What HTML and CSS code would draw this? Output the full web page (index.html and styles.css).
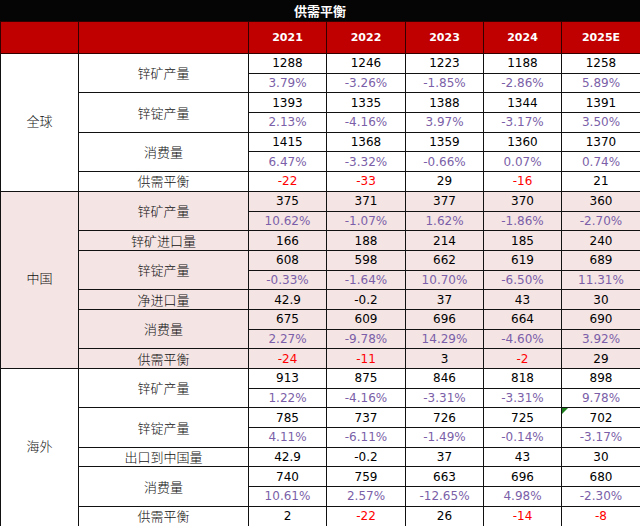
FILE: index.html
```html
<!DOCTYPE html>
<html>
<head>
<meta charset="utf-8">
<link rel="stylesheet" href="styles.css">
</head>
<body>
<div class="title">供需平衡</div>
<table class="grid">
<colgroup>
<col class="c1"><col class="c2"><col class="cy"><col class="cy2"><col class="cy"><col class="cy"><col class="cy2">
</colgroup>
<thead>
<tr class="hd"><th></th><th></th><th>2021</th><th>2022</th><th>2023</th><th>2024</th><th>2025E</th></tr>
</thead>
<tbody class="gl">
<tr><td class="grp" rowspan="7">全球</td><td class="lbl" rowspan="2">锌矿产量</td><td>1288</td><td>1246</td><td>1223</td><td>1188</td><td>1258</td></tr>
<tr class="pct"><td>3.79%</td><td>-3.26%</td><td>-1.85%</td><td>-2.86%</td><td>5.89%</td></tr>
<tr><td class="lbl" rowspan="2">锌锭产量</td><td>1393</td><td>1335</td><td>1388</td><td>1344</td><td>1391</td></tr>
<tr class="pct"><td>2.13%</td><td>-4.16%</td><td>3.97%</td><td>-3.17%</td><td>3.50%</td></tr>
<tr><td class="lbl" rowspan="2">消费量</td><td>1415</td><td>1368</td><td>1359</td><td>1360</td><td>1370</td></tr>
<tr class="pct"><td>6.47%</td><td>-3.32%</td><td>-0.66%</td><td>0.07%</td><td>0.74%</td></tr>
<tr><td class="lbl">供需平衡</td><td class="neg">-22</td><td class="neg">-33</td><td>29</td><td class="neg">-16</td><td>21</td></tr>
</tbody>
<tbody class="cn">
<tr><td class="grp" rowspan="9">中国</td><td class="lbl" rowspan="2">锌矿产量</td><td>375</td><td>371</td><td>377</td><td>370</td><td>360</td></tr>
<tr class="pct"><td>10.62%</td><td>-1.07%</td><td>1.62%</td><td>-1.86%</td><td>-2.70%</td></tr>
<tr><td class="lbl">锌矿进口量</td><td>166</td><td>188</td><td>214</td><td>185</td><td>240</td></tr>
<tr><td class="lbl" rowspan="2">锌锭产量</td><td>608</td><td>598</td><td>662</td><td>619</td><td>689</td></tr>
<tr class="pct"><td>-0.33%</td><td>-1.64%</td><td>10.70%</td><td>-6.50%</td><td>11.31%</td></tr>
<tr><td class="lbl">净进口量</td><td>42.9</td><td>-0.2</td><td>37</td><td>43</td><td>30</td></tr>
<tr><td class="lbl" rowspan="2">消费量</td><td>675</td><td>609</td><td>696</td><td>664</td><td>690</td></tr>
<tr class="pct"><td>2.27%</td><td>-9.78%</td><td>14.29%</td><td>-4.60%</td><td>3.92%</td></tr>
<tr><td class="lbl">供需平衡</td><td class="neg">-24</td><td class="neg">-11</td><td>3</td><td class="neg">-2</td><td>29</td></tr>
</tbody>
<tbody class="os">
<tr><td class="grp" rowspan="8">海外</td><td class="lbl" rowspan="2">锌矿产量</td><td>913</td><td>875</td><td>846</td><td>818</td><td>898</td></tr>
<tr class="pct"><td>1.22%</td><td>-4.16%</td><td>-3.31%</td><td>-3.31%</td><td>9.78%</td></tr>
<tr><td class="lbl" rowspan="2">锌锭产量</td><td>785</td><td>737</td><td>726</td><td>725</td><td class="mark"><span class="tri"></span>702</td></tr>
<tr class="pct"><td>4.11%</td><td>-6.11%</td><td>-1.49%</td><td>-0.14%</td><td>-3.17%</td></tr>
<tr><td class="lbl">出口到中国量</td><td>42.9</td><td>-0.2</td><td>37</td><td>43</td><td>30</td></tr>
<tr><td class="lbl" rowspan="2">消费量</td><td>740</td><td>759</td><td>663</td><td>696</td><td>680</td></tr>
<tr class="pct"><td>10.61%</td><td>2.57%</td><td>-12.65%</td><td>4.98%</td><td>-2.30%</td></tr>
<tr><td class="lbl">供需平衡</td><td>2</td><td class="neg">-22</td><td>26</td><td class="neg">-14</td><td class="neg">-8</td></tr>
</tbody>
</table>
</body>
</html>
```
FILE: styles.css
```css
html, body {
  margin: 0;
  padding: 0;
  background: #ffffff;
}
body {
  width: 640px;
  height: 526px;
  overflow: hidden;
  font-family: "DejaVu Sans", "Noto Sans CJK SC", sans-serif;
}
.title {
  height: 21px;
  line-height: 21px;
  background: #050505;
  color: #ffffff;
  text-align: center;
  font-family: "Noto Sans CJK SC", sans-serif;
  font-weight: bold;
  font-size: 13px;
}
.grid {
  width: 640px;
  table-layout: fixed;
  border-collapse: collapse;
  font-size: 12px;
  color: #000;
}
.c1 { width: 78px; }
.c2 { width: 170px; }
.cy { width: 78px; }
.cy2 { width: 79px; }
.grid th, .grid td {
  border: 1px solid #111;
  padding: 0;
  text-align: center;
  vertical-align: middle;
  white-space: nowrap;
  overflow: hidden;
}
.hd th {
  height: 31px;
  background: #c00000;
  color: #ffffff;
  font-size: 11px;
  font-weight: bold;
  border-color: #300;
}
.grid tbody td {
  height: 18.7px;
  line-height: 16px;
}
.grid tr.pct td {
  color: #7b5fa8;
  border-top: 1px solid #777;
}
.grid td.neg {
  color: #ff0000;
}
.grid td.lbl, .grid td.grp {
  font-family: "Noto Sans CJK SC", sans-serif;
  font-size: 13px;
  font-weight: 300;
  color: #111;
}
.grid td.grp {
  padding-bottom: 3px;
}
.cn td {
  background: #f4e4e4;
}
.mark {
  position: relative;
}
.tri {
  position: absolute;
  top: 0;
  left: 0;
  width: 0;
  height: 0;
  border-top: 6px solid #1b7d1b;
  border-right: 6px solid transparent;
}
```
